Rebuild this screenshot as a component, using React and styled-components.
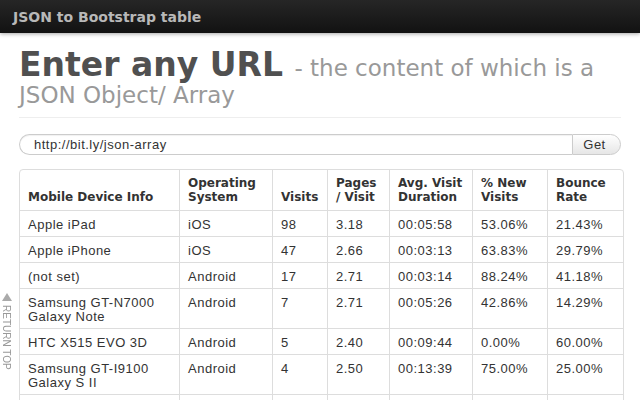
import React from 'react';
import styled, { createGlobalStyle } from 'styled-components';

const GlobalStyle = createGlobalStyle`
  html, body {
    margin: 0;
    padding: 0;
    overflow: hidden;
    background: #fff;
  }
  body {
    font-family: "Liberation Sans", Arial, sans-serif;
    color: #333;
  }
`;

const Navbar = styled.div`
  height: 33px;
  background: linear-gradient(#262626, #121212);
  box-shadow: 0 1px 4px rgba(0, 0, 0, 0.35);
  display: flex;
  align-items: center;
  padding: 0 13px;
`;

const Brand = styled.span`
  font-family: "DejaVu Sans", sans-serif;
  font-weight: bold;
  font-size: 14px;
  color: #b8b8b8;
`;

const Container = styled.div`
  padding: 18px 19px 0 19px;
`;

const PageHeader = styled.div`
  padding-bottom: 12px;
  border-bottom: 1px solid #eee;
  margin-bottom: 16px;
`;

const Title = styled.h1`
  margin: 0;
  font-family: "DejaVu Sans", sans-serif;
  font-weight: bold;
  font-size: 33px;
  line-height: 27px;
  color: #505050;
`;

const Subtitle = styled.small`
  font-family: "DejaVu Sans", sans-serif;
  font-weight: normal;
  font-size: 23px;
  line-height: 18px;
  color: #999;
`;

const InputGroup = styled.div`
  display: flex;
  height: 21px;
  margin-bottom: 14px;
`;

const UrlInput = styled.input`
  flex: 1;
  min-width: 0;
  box-sizing: border-box;
  height: 21px;
  border: 1px solid #ccc;
  border-right: none;
  border-radius: 11px 0 0 11px;
  padding: 0 14px;
  font-family: "Liberation Sans", Arial, sans-serif;
  font-size: 13px;
  letter-spacing: 0.5px;
  color: #333;
  box-shadow: inset 0 1px 1px rgba(0, 0, 0, 0.06);
  outline: none;
`;

const GetButton = styled.button`
  width: 49px;
  height: 21px;
  box-sizing: border-box;
  border: 1px solid #ccc;
  border-radius: 0 11px 11px 0;
  background: linear-gradient(#fff, #e6e6e6);
  font-family: "Liberation Sans", Arial, sans-serif;
  font-size: 13px;
  letter-spacing: 0.5px;
  color: #333;
  padding: 0 4px 0 0;
  text-align: center;
`;

const Table = styled.table`
  width: 603px;
  table-layout: fixed;
  border-collapse: separate;
  border-spacing: 0;
  border: 1px solid #ddd;
  border-radius: 4px;
`;

const HeadCell = styled.th`
  font-family: "DejaVu Sans", sans-serif;
  font-weight: bold;
  font-size: 12px;
  line-height: 14px;
  color: #333;
  text-align: left;
  vertical-align: bottom;
  padding: 6px 8px 6px 8px;
  border-left: ${p => (p.$first ? 'none' : '1px solid #ddd')};
`;

const Cell = styled.td`
  font-size: 13px;
  letter-spacing: 0.5px;
  line-height: 14px;
  color: #333;
  vertical-align: top;
  padding: 7px 8px 4px 8px;
  border-top: 1px solid #ddd;
  border-left: ${p => (p.$first ? 'none' : '1px solid #ddd')};
`;

const ReturnTop = styled.div`
  position: fixed;
  left: 1px;
  top: 293px;
  display: flex;
  flex-direction: column;
  align-items: center;
  color: #999;
`;

const Arrow = styled.span`
  width: 0;
  height: 0;
  border-left: 5px solid transparent;
  border-right: 5px solid transparent;
  border-bottom: 8px solid #aaa;
  margin-bottom: 4px;
`;

const ReturnText = styled.span`
  writing-mode: vertical-rl;
  font-family: "Liberation Sans", Arial, sans-serif;
  font-size: 10px;
  line-height: 11px;
`;

const columns = [
  { label: 'Mobile Device Info', width: 159 },
  { label: 'Operating System', width: 93 },
  { label: 'Visits', width: 55 },
  { label: 'Pages / Visit', width: 62 },
  { label: 'Avg. Visit Duration', width: 83 },
  { label: '% New Visits', width: 75 },
  { label: 'Bounce Rate', width: 76 },
];

const rows = [
  ['Apple iPad', 'iOS', '98', '3.18', '00:05:58', '53.06%', '21.43%'],
  ['Apple iPhone', 'iOS', '47', '2.66', '00:03:13', '63.83%', '29.79%'],
  ['(not set)', 'Android', '17', '2.71', '00:03:14', '88.24%', '41.18%'],
  ['Samsung GT-N7000 Galaxy Note', 'Android', '7', '2.71', '00:05:26', '42.86%', '14.29%'],
  ['HTC X515 EVO 3D', 'Android', '5', '2.40', '00:09:44', '0.00%', '60.00%'],
  ['Samsung GT-I9100 Galaxy S II', 'Android', '4', '2.50', '00:13:39', '75.00%', '25.00%'],
  ['Samsung GT-S5830 Galaxy Ace', 'Android', '3', '1.67', '00:00:41', '100.00%', '66.67%'],
];

const App = () => (
  <>
    <GlobalStyle />
    <Navbar>
      <Brand>JSON to Bootstrap table</Brand>
    </Navbar>
    <Container>
      <PageHeader>
        <Title>
          Enter any URL <Subtitle>- the content of which is a JSON Object/ Array</Subtitle>
        </Title>
      </PageHeader>
      <InputGroup>
        <UrlInput defaultValue="http://bit.ly/json-array" />
        <GetButton>Get</GetButton>
      </InputGroup>
      <Table>
        <colgroup>
          {columns.map(c => (
            <col key={c.label} style={{ width: c.width }} />
          ))}
        </colgroup>
        <thead>
          <tr>
            {columns.map((c, i) => (
              <HeadCell key={c.label} $first={i === 0}>
                {c.label}
              </HeadCell>
            ))}
          </tr>
        </thead>
        <tbody>
          {rows.map((row, r) => (
            <tr key={`row-${r}`}>
              {row.map((value, i) => (
                <Cell key={`cell-${r}-${i}`} $first={i === 0}>
                  {value}
                </Cell>
              ))}
            </tr>
          ))}
        </tbody>
      </Table>
    </Container>
    <ReturnTop>
      <Arrow />
      <ReturnText>RETURN TOP</ReturnText>
    </ReturnTop>
  </>
);

export default App;
